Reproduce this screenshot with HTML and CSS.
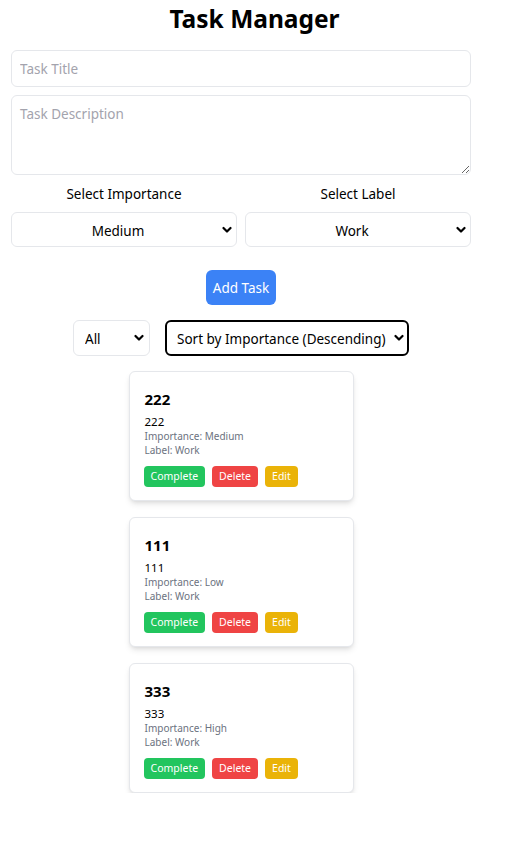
FILE: index.html
```html
<!DOCTYPE html>
<html lang="en">
<head>
<meta charset="utf-8">
<title>Task Manager</title>
<link rel="stylesheet" href="styles.css">
</head>
<body>
<div class="app">
  <h1 class="app-title">Task Manager</h1>
  <div class="form">
    <input class="text-input" type="text" placeholder="Task Title">
    <textarea class="text-area" placeholder="Task Description"></textarea>
    <div class="select-grid">
      <div class="select-group">
        <label class="select-label">Select Importance</label>
        <div class="select-wrap">
          <select class="select centered"><option>Medium</option></select>
          <svg class="chev" width="10" height="8" viewBox="0 0 10 8"><path d="M1.5 2 L5 5.5 L8.5 2" fill="none" stroke="#000" stroke-width="2.2" stroke-linecap="round" stroke-linejoin="round"/></svg>
        </div>
      </div>
      <div class="select-group">
        <label class="select-label">Select Label</label>
        <div class="select-wrap">
          <select class="select centered"><option>Work</option></select>
          <svg class="chev" width="10" height="8" viewBox="0 0 10 8"><path d="M1.5 2 L5 5.5 L8.5 2" fill="none" stroke="#000" stroke-width="2.2" stroke-linecap="round" stroke-linejoin="round"/></svg>
        </div>
      </div>
    </div>
    <button class="add-btn">Add Task</button>
    <div class="filters">
      <div class="select-wrap filter-all">
        <select class="select left"><option>All</option></select>
        <svg class="chev" width="10" height="8" viewBox="0 0 10 8"><path d="M1.5 2 L5 5.5 L8.5 2" fill="none" stroke="#000" stroke-width="2.2" stroke-linecap="round" stroke-linejoin="round"/></svg>
      </div>
      <div class="select-wrap filter-sort">
        <select class="select left focused"><option>Sort by Importance (Descending)</option></select>
        <svg class="chev" width="10" height="8" viewBox="0 0 10 8"><path d="M1.5 2 L5 5.5 L8.5 2" fill="none" stroke="#000" stroke-width="2.2" stroke-linecap="round" stroke-linejoin="round"/></svg>
      </div>
    </div>
    <div class="task-list">
      <div class="card">
        <h3 class="card-title">222</h3>
        <p class="card-desc">222</p>
        <p class="card-meta">Importance: Medium</p>
        <p class="card-meta">Label: Work</p>
        <div class="card-actions">
          <button class="btn btn-green">Complete</button>
          <button class="btn btn-red">Delete</button>
          <button class="btn btn-yellow">Edit</button>
        </div>
      </div>
      <div class="card">
        <h3 class="card-title">111</h3>
        <p class="card-desc">111</p>
        <p class="card-meta">Importance: Low</p>
        <p class="card-meta">Label: Work</p>
        <div class="card-actions">
          <button class="btn btn-green">Complete</button>
          <button class="btn btn-red">Delete</button>
          <button class="btn btn-yellow">Edit</button>
        </div>
      </div>
      <div class="card">
        <h3 class="card-title">333</h3>
        <p class="card-desc">333</p>
        <p class="card-meta">Importance: High</p>
        <p class="card-meta">Label: Work</p>
        <div class="card-actions">
          <button class="btn btn-green">Complete</button>
          <button class="btn btn-red">Delete</button>
          <button class="btn btn-yellow">Edit</button>
        </div>
      </div>
    </div>
  </div>
</div>
</body>
</html>
```

FILE: styles.css
```css
* { box-sizing: border-box; }

body {
  margin: 0;
  background: #fff;
  color: #000;
  font-family: "Noto Sans", "Open Sans", sans-serif;
}

.app {
  padding-top: 3px;
}

.app-title {
  margin: 0 0 15px;
  font-size: 24.5px;
  line-height: 32px;
  font-weight: 700;
  text-align: center;
}

.form {
  margin-left: 11px;
  width: 460px;
  display: flex;
  flex-direction: column;
}

.text-input,
.text-area {
  width: 100%;
  border: 1px solid #e5e7eb;
  border-radius: 6px;
  font-family: inherit;
  font-size: 13.5px;
  color: #000;
  background: #fff;
  outline: none;
}

.text-input {
  height: 37px;
  padding: 0 8px;
}

.text-area {
  margin-top: 8px;
  height: 80px;
  padding: 8px;
  line-height: 20px;
  resize: vertical;
  display: block;
}

.text-input::placeholder,
.text-area::placeholder {
  color: #a3a3ad;
}

.select-grid {
  margin-top: 9px;
  display: grid;
  grid-template-columns: 1fr 1fr;
  column-gap: 8px;
}

.select-label {
  display: block;
  text-align: center;
  font-size: 13.5px;
  line-height: 20px;
  margin-bottom: 8px;
}

.select-wrap {
  position: relative;
}

.select {
  width: 100%;
  height: 35px;
  border: 1px solid #e5e7eb;
  border-radius: 6px;
  background: #fff;
  font-family: inherit;
  font-size: 13.5px;
  color: #000;
  -webkit-appearance: none;
  appearance: none;
  outline: none;
  display: block;
}

.select.centered {
  text-align: center;
  text-align-last: center;
  padding: 2px 20px 0 8px;
}

.chev {
  position: absolute;
  right: 5px;
  top: 50%;
  transform: translateY(-50%);
  pointer-events: none;
}

.add-btn {
  align-self: center;
  margin-top: 23px;
  height: 35px;
  padding: 0 7px;
  border: none;
  border-radius: 6px;
  background: #3b82f6;
  color: #fff;
  font-family: inherit;
  font-size: 13.5px;
}

.filters {
  margin-top: 15px;
  display: flex;
  justify-content: center;
  gap: 15px;
}

.filter-all {
  width: 77px;
}

.filter-sort {
  width: 244px;
}

.select.left {
  height: 36px;
  padding: 1px 20px 0 11px;
  text-align: left;
}

.select.focused {
  border: 2px solid #000;
  padding-left: 10px;
}

.filter-all .chev { right: 6px; }
.filter-sort .chev { right: 5px; }

.task-list {
  margin-top: 15px;
  display: flex;
  flex-direction: column;
  align-items: center;
  gap: 16px;
}

.card {
  width: 225px;
  border: 1px solid #e5e7eb;
  border-radius: 6px;
  background: #fff;
  padding: 16px 15px 13px;
  box-shadow: 0 4px 6px -1px rgba(0, 0, 0, 0.1), 0 2px 4px -2px rgba(0, 0, 0, 0.1);
}

.card-title {
  margin: 0 0 4px;
  font-size: 15px;
  line-height: 22px;
  font-weight: 700;
}

.card-desc {
  margin: 0;
  font-size: 11.5px;
  line-height: 15px;
}

.card-meta {
  margin: 0;
  font-size: 10px;
  line-height: 14px;
  color: #6b7280;
}

.card-actions {
  margin: 9px 0 0 -1px;
  display: flex;
  gap: 7px;
}

.btn {
  height: 21px;
  padding: 0 7px;
  border: none;
  border-radius: 4px;
  color: #fff;
  font-family: inherit;
  font-size: 10.5px;
  line-height: 21px;
}

.btn-green { background: #22c55e; }
.btn-red { background: #ef4444; }
.btn-yellow { background: #eab308; }
```
